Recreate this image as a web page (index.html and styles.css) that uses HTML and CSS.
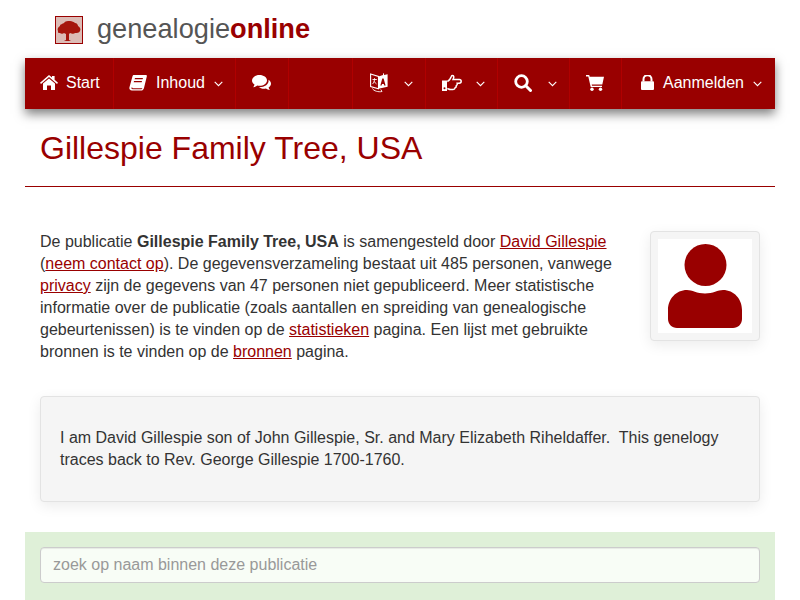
FILE: index.html
```html
<!DOCTYPE html>
<html lang="nl">
<head>
<meta charset="utf-8">
<title>Gillespie Family Tree, USA</title>
<link rel="stylesheet" href="styles.css">
</head>
<body>
<div class="page">
  <header class="brand">
    <svg class="brand-logo" width="28" height="28" viewBox="0 0 28 28">
      <defs><filter id="soft" x="-10%" y="-10%" width="120%" height="120%"><feGaussianBlur stdDeviation="0.6"/></filter></defs>
      <rect x="0.5" y="0.5" width="27" height="27" fill="#dcbcb6" stroke="#990000"/>
      <path d="M3 15c-1-2 0-4 2-5 0-2 3-2 4-3 1-2 4-2 6-2 2 0 4 1 5 2 2 0 3 2 3 3 2 1 3 3 2 5-1 2-3 2-5 2-1 1-3 1-5 0l-1 1v6l2 1H9l2-1v-6l-2-1c-1 1-3 1-4 0-1 0-2 0-2-1z" fill="#a5140a" filter="url(#soft)"/>
    </svg>
    <span class="brand-name">genealogie<b>online</b></span>
  </header>
  <nav class="nav">
    <a class="nav-item w-start">
      <svg class="ic" width="18" height="15" viewBox="0 0 18 15"><path d="M9 0l3 2.600V1h2.600v3.800L18 7.800l-1 1.100L9 2 1 8.900 0 7.800zM9 3.500l6 5.100V15h-4v-4.500H7V15H3V8.600z" fill="#fff"/></svg>
      <span>Start</span>
    </a>
    <a class="nav-item w-inhoud">
      <svg class="ic" width="18" height="16" viewBox="0 0 18 16"><path d="M5 0h12c1 0 1 1 .8 1.600L15 13c-.4 1.500-1.300 2.600-3 2.600H3C1 15.600 0 14 .4 12.500L3.500 1.200C3.700.5 4.300 0 5 0zm1 3l-.4 1.300h8L14 3zM5 6l-.3 1.300h8L13 6zM2.500 12.500c-.3 1 .2 1.700 1.200 1.700h8.500c.6 0 1-.3 1.200-.9H3.800c-.4 0-.6-.3-.4-.8z" fill="#fff" fill-rule="evenodd"/></svg>
      <span>Inhoud</span>
      <svg class="chev" width="9" height="6" viewBox="0 0 9 6"><path d="M.7.8l3.800 3.800L8.300.8" fill="none" stroke="#fff" stroke-width="1.100"/></svg>
    </a>
    <a class="nav-item w-chat">
      <svg class="ic" width="19" height="16" viewBox="0 0 19 16"><path d="M7.500 0C11.600 0 15 2.400 15 5.400s-3.400 5.400-7.500 5.400c-.8 0-1.500-.1-2.200-.2C4.100 11.500 2.800 12 1.200 12.200c.6-.8 1.100-1.600 1.300-2.700C1 8.500 0 7 0 5.400 0 2.400 3.400 0 7.500 0z" fill="#fff"/><path d="M16.500 4.800c1.500 1 2.500 2.400 2.500 3.900 0 1.500-.9 2.900-2.400 3.800.2 1 .7 1.800 1.300 2.600-1.600-.2-2.900-.7-4-1.500-.7.100-1.400.2-2.100.2-2 0-3.700-.6-5-1.500 5.500.2 10.600-3 9.700-7.500z" fill="#fff"/></svg>
    </a>
    <div class="nav-gap"></div>
    <a class="nav-item w-lang">
      <svg class="ic" width="18" height="20" viewBox="0 0 18 20"><path d="M.6 1l7.900 2.500v12.300L.6 13.500z" fill="none" stroke="#fff" stroke-width="1.100"/><path d="M8.500 3.500L13 2V0l1 .8V2l3.600-.8v12.600l-9.100 2z" fill="#fff"/><path d="M10.300 12.500l2-7h1.300l2 7h-1.400l-.4-1.600h-1.800l-.4 1.600z" fill="#990000"/><path d="M2.500 6.500h4.300M4.500 5.200v1.300c0 2-.9 3.400-2 4.500M3.800 8.300l2.700 2.600" fill="none" stroke="#fff" stroke-width=".9"/><path d="M2.500 15.500c1 2.500 6 3.800 9.500 3l-1.200-2" fill="none" stroke="#fff" stroke-width=".9"/></svg>
      <svg class="chev" width="9" height="6" viewBox="0 0 9 6"><path d="M.7.8l3.800 3.800L8.300.8" fill="none" stroke="#fff" stroke-width="1.100"/></svg>
    </a>
    <a class="nav-item w-hand">
      <svg class="ic" width="20" height="17" viewBox="0 0 20 17"><path d="M5.300 7.500c1.500-.5 3-2.500 4-5 .4-1.200 2.300-1.500 2.500.3.100 1-.5 1.800-.8 2.700h6.300c1.200 0 1.900.9 1.900 1.800 0 1.100-.9 1.900-2 1.900h-2c.3 1.200-.2 2-.9 2.400.2 1.200-.4 1.900-1.200 2.200-.1 1-.9 1.700-2 1.700H8.500c-1.300 0-2.100-.8-3.200-1" fill="none" stroke="#fff" stroke-width="1.500"/><rect x="0" y="6.500" width="5" height="10.500" fill="#fff"/><circle cx="2.500" cy="14.200" r="1" fill="#990000"/></svg>
      <svg class="chev" width="9" height="6" viewBox="0 0 9 6"><path d="M.7.8l3.800 3.800L8.300.8" fill="none" stroke="#fff" stroke-width="1.100"/></svg>
    </a>
    <a class="nav-item w-search">
      <svg class="ic" width="18" height="18" viewBox="0 0 18 18"><circle cx="7.500" cy="7.500" r="5.800" fill="none" stroke="#fff" stroke-width="2.800"/><path d="M11.800 11.800l4.700 4.700" stroke="#fff" stroke-width="3" stroke-linecap="round"/></svg>
      <svg class="chev" width="9" height="6" viewBox="0 0 9 6"><path d="M.7.8l3.800 3.800L8.300.8" fill="none" stroke="#fff" stroke-width="1.100"/></svg>
    </a>
    <a class="nav-item w-cart">
      <svg class="ic" width="18" height="16" viewBox="0 0 18 16"><path d="M0 0h3.200l.5 1.800H18l-1.700 7.600H5.700l.3 1.300h10v1.400H4.700L2.300 1.400H0z" fill="#fff"/><circle cx="6" cy="14.300" r="1.700" fill="#fff"/><circle cx="14.500" cy="14.300" r="1.700" fill="#fff"/></svg>
    </a>
    <a class="nav-item w-login">
      <svg class="ic" width="13" height="15" viewBox="0 0 13 15"><path d="M2.500 6.500V4.200a4 4 0 0 1 8 0v2.300" fill="none" stroke="#fff" stroke-width="2"/><rect y="6.200" width="13" height="8.800" rx="1" fill="#fff"/></svg>
      <span>Aanmelden</span>
      <svg class="chev" width="9" height="6" viewBox="0 0 9 6"><path d="M.7.8l3.800 3.800L8.300.8" fill="none" stroke="#fff" stroke-width="1.100"/></svg>
    </a>
  </nav>
  <h1 class="title">Gillespie Family Tree, USA</h1>
  <main class="content">
    <section class="intro">
      <p class="intro-text">De publicatie <b>Gillespie Family Tree, USA</b> is samengesteld door <a href="#">David Gillespie</a> (<a href="#">neem contact op</a>). De gegevensverzameling bestaat uit 485 personen, vanwege <a href="#">privacy</a> zijn de gegevens van 47 personen niet gepubliceerd. Meer statistische informatie over de publicatie (zoals aantallen en spreiding van genealogische gebeurtenissen) is te vinden op de <a href="#">statistieken</a> pagina. Een lijst met gebruikte bronnen is te vinden op de <a href="#">bronnen</a> pagina.</p>
      <div class="avatar">
        <svg width="94" height="94" viewBox="0 0 94 94">
          <rect width="94" height="94" fill="#fff"/>
          <circle cx="47.500" cy="26" r="21" fill="#990000"/>
          <path d="M29 51c5 0 10 3.500 18 3.500S60 51 65 51c11 0 19 9 19 20v9c0 5-4 9-9 9H19c-5 0-9-4-9-9v-9c0-11 8-20 19-20z" fill="#990000"/>
        </svg>
      </div>
    </section>
    <div class="well">I am David Gillespie son of John Gillespie, Sr. and Mary Elizabeth Riheldaffer.&nbsp; This genelogy traces back to Rev. George Gillespie 1700-1760.</div>
  </main>
  <div class="search">
    <input class="search-input" type="text" placeholder="zoek op naam binnen deze publicatie">
  </div>
</div>
</body>
</html>
```
FILE: styles.css
```css
* { box-sizing: border-box; }
html, body { margin: 0; height: 600px; overflow: hidden; background: #fff; }
body { font-family: "Liberation Sans", Arial, sans-serif; font-size: 16px; line-height: 22px; color: #333; }
.page { width: 750px; margin-left: 25px; }
.brand { display: flex; align-items: center; height: 58px; padding-left: 30px; gap: 14px; }
.brand-logo { flex: none; margin-top: 2px; }
.brand-name { font-size: 27.2px; line-height: 30px; color: #555; }
.brand-name b { color: #990000; }
.nav { display: flex; height: 51px; background: #990000; box-shadow: 0 5px 10px rgba(0,0,0,.5); color: #fff; }
.nav-item { display: flex; align-items: center; gap: 9px; padding-left: 15px; padding-bottom: 2px; border-right: 1px solid #b00000; }
.nav-gap { flex: 1; border-right: 1px solid #b00000; }
.ic { flex: none; }
.chev { flex: none; margin-left: 0; margin-top: 3px; }
.w-start { width: 89px; gap: 8px; }
.w-inhoud { width: 122px; }
.w-chat { width: 53px; padding-left: 16px; }
.w-lang { width: 73px; padding-left: 17px; gap: 16px; }
.w-hand { width: 72px; padding-left: 16px; gap: 14px; }
.w-search { width: 72px; padding-left: 16px; gap: 16px; }
.w-cart { width: 52px; padding-left: 16px; }
.w-login { width: 153px; padding-left: 19px; border-right: 0; }
.title { margin: 0; height: 78px; padding: 21px 15px 0; font-size: 32px; line-height: 36px; font-weight: 400; color: #990000; border-bottom: 1px solid #990000; }
.content { padding: 0 15px; }
.intro { display: flex; justify-content: space-between; align-items: flex-start; padding-top: 44px; }
.intro-text { margin: 0; width: 580px; }
.intro-text a { color: #990000; text-decoration: underline; }
.avatar { width: 110px; height: 110px; padding: 7px; background: #f5f5f5; border: 1px solid #e3e3e3; border-radius: 4px; box-shadow: 0 4px 14px rgba(0,0,0,.08); }
.avatar svg { display: block; }
.well { margin-top: 33px; height: 106px; padding: 30px 19px; background: #f5f5f5; border: 1px solid #e3e3e3; border-radius: 4px; box-shadow: 0 4px 14px rgba(0,0,0,.08); }
.search { margin-top: 30px; height: 68px; padding: 15px; background: #dff0d8; }
.search-input { display: block; width: 100%; height: 36px; padding: 6px 12px; font: 16px "Liberation Sans", Arial, sans-serif; color: #555; background: #f8fdf6; border: 1px solid #ccc; border-radius: 4px; box-shadow: inset 0 1px 1px rgba(0,0,0,.075); }
.search-input::placeholder { color: #999; opacity: 1; }
```
